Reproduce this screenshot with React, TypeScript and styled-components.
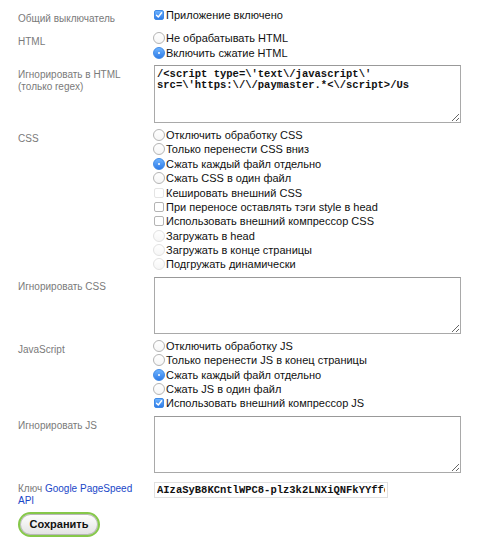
import React from "react";
import styled, { createGlobalStyle, css } from "styled-components";

const Global = createGlobalStyle`
  html, body { margin: 0; padding: 0; background: #fff; }
  body { font-family: "Liberation Sans", Arial, Helvetica, sans-serif; color: #111; }
`;

const Page = styled.form`
  display: flex;
  flex-direction: column;
  gap: 5px;
  padding: 8px 0 0 18px;
  width: 462px;
  box-sizing: border-box;
`;

const Row = styled.div<{ $mt?: number }>`
  display: grid;
  grid-template-columns: 136px 1fr;
  align-items: start;
  margin-top: ${(p) => p.$mt ?? 0}px;
`;

const Label = styled.div<{ $pt?: number; $lh?: number }>`
  font-size: 10px;
  line-height: ${(p) => p.$lh ?? 12}px;
  color: #7a7a7a;
  padding-top: ${(p) => p.$pt ?? 5}px;
  padding-right: 6px;
`;

const Link = styled.a`
  color: #1a47c8;
  text-decoration: none;
`;

const Options = styled.div`
  display: flex;
  flex-direction: column;
`;

const Option = styled.label`
  display: flex;
  align-items: center;
  height: 14.4px;
  font-size: 11px;
  color: #111;
  margin-left: -1px;
  white-space: nowrap;
`;

const Radio = styled.span<{ $on?: boolean; $dim?: boolean }>`
  width: 12px;
  height: 12px;
  border-radius: 50%;
  box-sizing: border-box;
  margin-right: 1px;
  flex: none;
  position: relative;
  border: 1px solid ${(p) => (p.$dim ? "#e2e2e2" : "#b4b4b4")};
  background: linear-gradient(#fff, #f6f6f6);
  ${(p) =>
    p.$on &&
    css`
      border-color: #3f8ae6;
      background: linear-gradient(#6db3ff, #2f7ce8);
      &::after {
        content: "";
        position: absolute;
        left: 4px;
        top: 4px;
        width: 2px;
        height: 2px;
        border-radius: 50%;
        background: #fff;
      }
    `}
`;

const Check = styled.span<{ $on?: boolean; $dim?: boolean }>`
  width: 10px;
  height: 10px;
  border-radius: 2px;
  box-sizing: border-box;
  margin: 0 2px 0 1px;
  flex: none;
  display: flex;
  align-items: center;
  justify-content: center;
  border: 1px solid ${(p) => (p.$dim ? "#e4e4e4" : "#b4b4b4")};
  background: #fff;
  ${(p) =>
    p.$on &&
    css`
      border-color: #3f8ae6;
      background: linear-gradient(#6db3ff, #2f7ce8);
    `}
`;

const Area = styled.textarea<{ $h: number }>`
  width: 307px;
  height: ${(p) => p.$h}px;
  box-sizing: border-box;
  border: 1px solid #a9a9a9;
  border-top-color: #999;
  padding: 3px 2px;
  margin: 0;
  font-family: "Liberation Mono", "Courier New", monospace;
  font-size: 10.5px;
  font-weight: bold;
  line-height: 11.5px;
  color: #111;
  display: block;
  outline: none;
`;

const Input = styled.input`
  width: 234px;
  height: 16px;
  box-sizing: border-box;
  border: 1px solid #e0e0e0;
  padding: 0 2px;
  margin: 0;
  font-family: "Liberation Mono", "Courier New", monospace;
  font-size: 10.5px;
  font-weight: bold;
  color: #111;
  display: block;
  outline: none;
`;

const SaveButton = styled.button`
  width: 82px;
  height: 25px;
  border-radius: 13px;
  border: 2px solid #86c84a;
  background: linear-gradient(#ffffff, #e2e2e2);
  box-shadow: inset 0 0 0 1px #b8b8b8;
  font-family: "Liberation Sans", Arial, sans-serif;
  font-weight: bold;
  font-size: 11px;
  color: #111;
  padding: 0;
`;

const Tick = () => (
  <svg width="8" height="8" viewBox="0 0 8 8">
    <path d="M1.5 4.2 L3.3 6 L6.6 1.8" fill="none" stroke="#fff" strokeWidth="1.4" strokeLinecap="round" strokeLinejoin="round" />
  </svg>
);

type Opt = { t: string; kind: "r" | "c"; on?: boolean; dim?: boolean };

const OptionList = ({ items }: { items: Opt[] }) => (
  <Options>
    {items.map((o) => (
      <Option key={o.t}>
        {o.kind === "r" ? (
          <Radio $on={o.on} $dim={o.dim} />
        ) : (
          <Check $on={o.on} $dim={o.dim}>{o.on && <Tick />}</Check>
        )}
        {o.t}
      </Option>
    ))}
  </Options>
);

export default function App() {
  return (
    <>
      <Global />
      <Page onSubmit={(e) => e.preventDefault()}>
        <Row>
          <Label>Общий выключатель</Label>
          <OptionList items={[{ t: "Приложение включено", kind: "c", on: true }]} />
        </Row>
        <Row $mt={1}>
          <Label>HTML</Label>
          <OptionList
            items={[
              { t: "Не обрабатывать HTML", kind: "r" },
              { t: "Включить сжатие HTML", kind: "r", on: true },
            ]}
          />
        </Row>
        <Row>
          <Label $pt={4} $lh={12.5}>Игнорировать в HTML (только regex)</Label>
          <Area
            $h={58}
            defaultValue={"/<script type=\\'text\\/javascript\\' src=\\'https:\\/\\/paymaster.*<\\/script>/Us"}
          />
        </Row>
        <Row>
          <Label>CSS</Label>
          <OptionList
            items={[
              { t: "Отключить обработку CSS", kind: "r" },
              { t: "Только перенести CSS вниз", kind: "r" },
              { t: "Сжать каждый файл отдельно", kind: "r", on: true },
              { t: "Сжать CSS в один файл", kind: "r" },
              { t: "Кешировать внешний CSS", kind: "c", dim: true },
              { t: "При переносе оставлять тэги style в head", kind: "c" },
              { t: "Использовать внешний компрессор CSS", kind: "c" },
              { t: "Загружать в head", kind: "r", dim: true },
              { t: "Загружать в конце страницы", kind: "r", dim: true },
              { t: "Подгружать динамически", kind: "r", dim: true },
            ]}
          />
        </Row>
        <Row>
          <Label $pt={4}>Игнорировать CSS</Label>
          <Area $h={57} defaultValue="" />
        </Row>
        <Row>
          <Label>JavaScript</Label>
          <OptionList
            items={[
              { t: "Отключить обработку JS", kind: "r" },
              { t: "Только перенести JS в конец страницы", kind: "r" },
              { t: "Сжать каждый файл отдельно", kind: "r", on: true },
              { t: "Сжать JS в один файл", kind: "r" },
              { t: "Использовать внешний компрессор JS", kind: "c", on: true },
            ]}
          />
        </Row>
        <Row>
          <Label $pt={4}>Игнорировать JS</Label>
          <Area $h={57} defaultValue="" />
        </Row>
        <Row $mt={4}>
          <Label $pt={1} $lh={12}>
            Ключ <Link href="#">Google PageSpeed</Link>
            <br />
            <Link href="#">API</Link>
          </Label>
          <Input defaultValue="AIzaSyB8KCntlWPC8-plz3k2LNXiQNFkYYffc" />
        </Row>
        <div>
          <SaveButton type="submit">Сохранить</SaveButton>
        </div>
      </Page>
    </>
  );
}
